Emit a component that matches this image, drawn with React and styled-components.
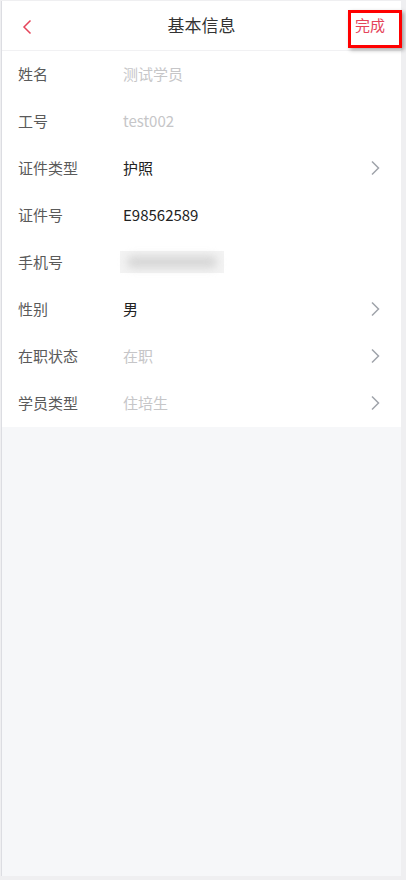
import React from 'react';
import styled, { createGlobalStyle } from 'styled-components';

const GlobalStyle = createGlobalStyle`
  html, body {
    margin: 0;
    padding: 0;
    background: #efeff1;
  }
  body {
    font-family: "Noto Sans CJK SC", "Noto Sans", sans-serif;
  }
`;

const Screen = styled.div`
  position: relative;
  margin: 1px 0 0 1px;
  width: 400px;
  height: 875px;
  background: #f6f7f9;
  border-left: 1px solid #dcdde2;
  box-sizing: border-box;
`;

const Header = styled.div`
  position: relative;
  height: 50px;
  padding-bottom: 2px;
  background: #fff;
  border-bottom: 1px solid #f1f1f3;
  display: flex;
  align-items: center;
  justify-content: center;
  box-sizing: border-box;
`;

const Title = styled.div`
  font-size: 17px;
  color: #333;
`;

const Back = styled.div`
  position: absolute;
  left: 20px;
  top: 17px;
  width: 16px;
  height: 18px;
  display: flex;
  align-items: center;
`;

const Done = styled.div`
  position: absolute;
  right: 16px;
  top: 13px;
  font-size: 15px;
  color: #e5445a;
`;

const Highlight = styled.div`
  position: absolute;
  right: -1px;
  top: 9px;
  width: 54px;
  height: 38px;
  border: 3px solid #ff0000;
  box-sizing: border-box;
  box-shadow: 2px 2px 4px rgba(0, 0, 0, 0.35);
`;

const List = styled.div`
  background: #fff;
`;

const Row = styled.div`
  height: 47px;
  padding: 0 21px 2px 16px;
  display: flex;
  align-items: center;
  box-sizing: border-box;
`;

const Label = styled.div`
  width: 105px;
  font-size: 15px;
  color: #5a5a5a;
`;

const Value = styled.div`
  flex: 1;
  font-size: 15px;
  color: ${p => (p.$placeholder ? '#c6c6c8' : '#222')};
`;

const Blur = styled.div`
  width: 104px;
  height: 22px;
  margin-left: -3px;
  background: #f3f3f3;
  display: flex;
  align-items: center;
  justify-content: center;
  &::after {
    content: '';
    width: 90px;
    height: 12px;
    border-radius: 6px;
    background: #d6d6d6;
    filter: blur(4px);
  }
`;

const Chevron = ({ color = '#a0a4ab', dir = 'right' }) => (
  <svg width="10" height="16" viewBox="0 0 10 16">
    <polyline
      points={dir === 'right' ? '2,1.5 8.5,8 2,14.5' : '8.5,1.5 2,8 8.5,14.5'}
      fill="none"
      stroke={color}
      strokeWidth="1.5"
    />
  </svg>
);

const rows = [
  { label: '姓名', value: '测试学员', placeholder: true },
  { label: '工号', value: 'test002', placeholder: true },
  { label: '证件类型', value: '护照', arrow: true },
  { label: '证件号', value: 'E98562589' },
  { label: '手机号', blur: true },
  { label: '性别', value: '男', arrow: true },
  { label: '在职状态', value: '在职', placeholder: true, arrow: true },
  { label: '学员类型', value: '住培生', placeholder: true, arrow: true },
];

export default function App() {
  return (
    <>
      <GlobalStyle />
      <Screen>
        <Header>
          <Back>
            <Chevron color="#e5445a" dir="left" />
          </Back>
          <Title>基本信息</Title>
          <Done>完成</Done>
          <Highlight />
        </Header>
        <List>
          {rows.map(r => (
            <Row key={r.label}>
              <Label>{r.label}</Label>
              <Value $placeholder={r.placeholder}>
                {r.blur ? <Blur /> : r.value}
              </Value>
              {r.arrow && <Chevron />}
            </Row>
          ))}
        </List>
      </Screen>
    </>
  );
}
